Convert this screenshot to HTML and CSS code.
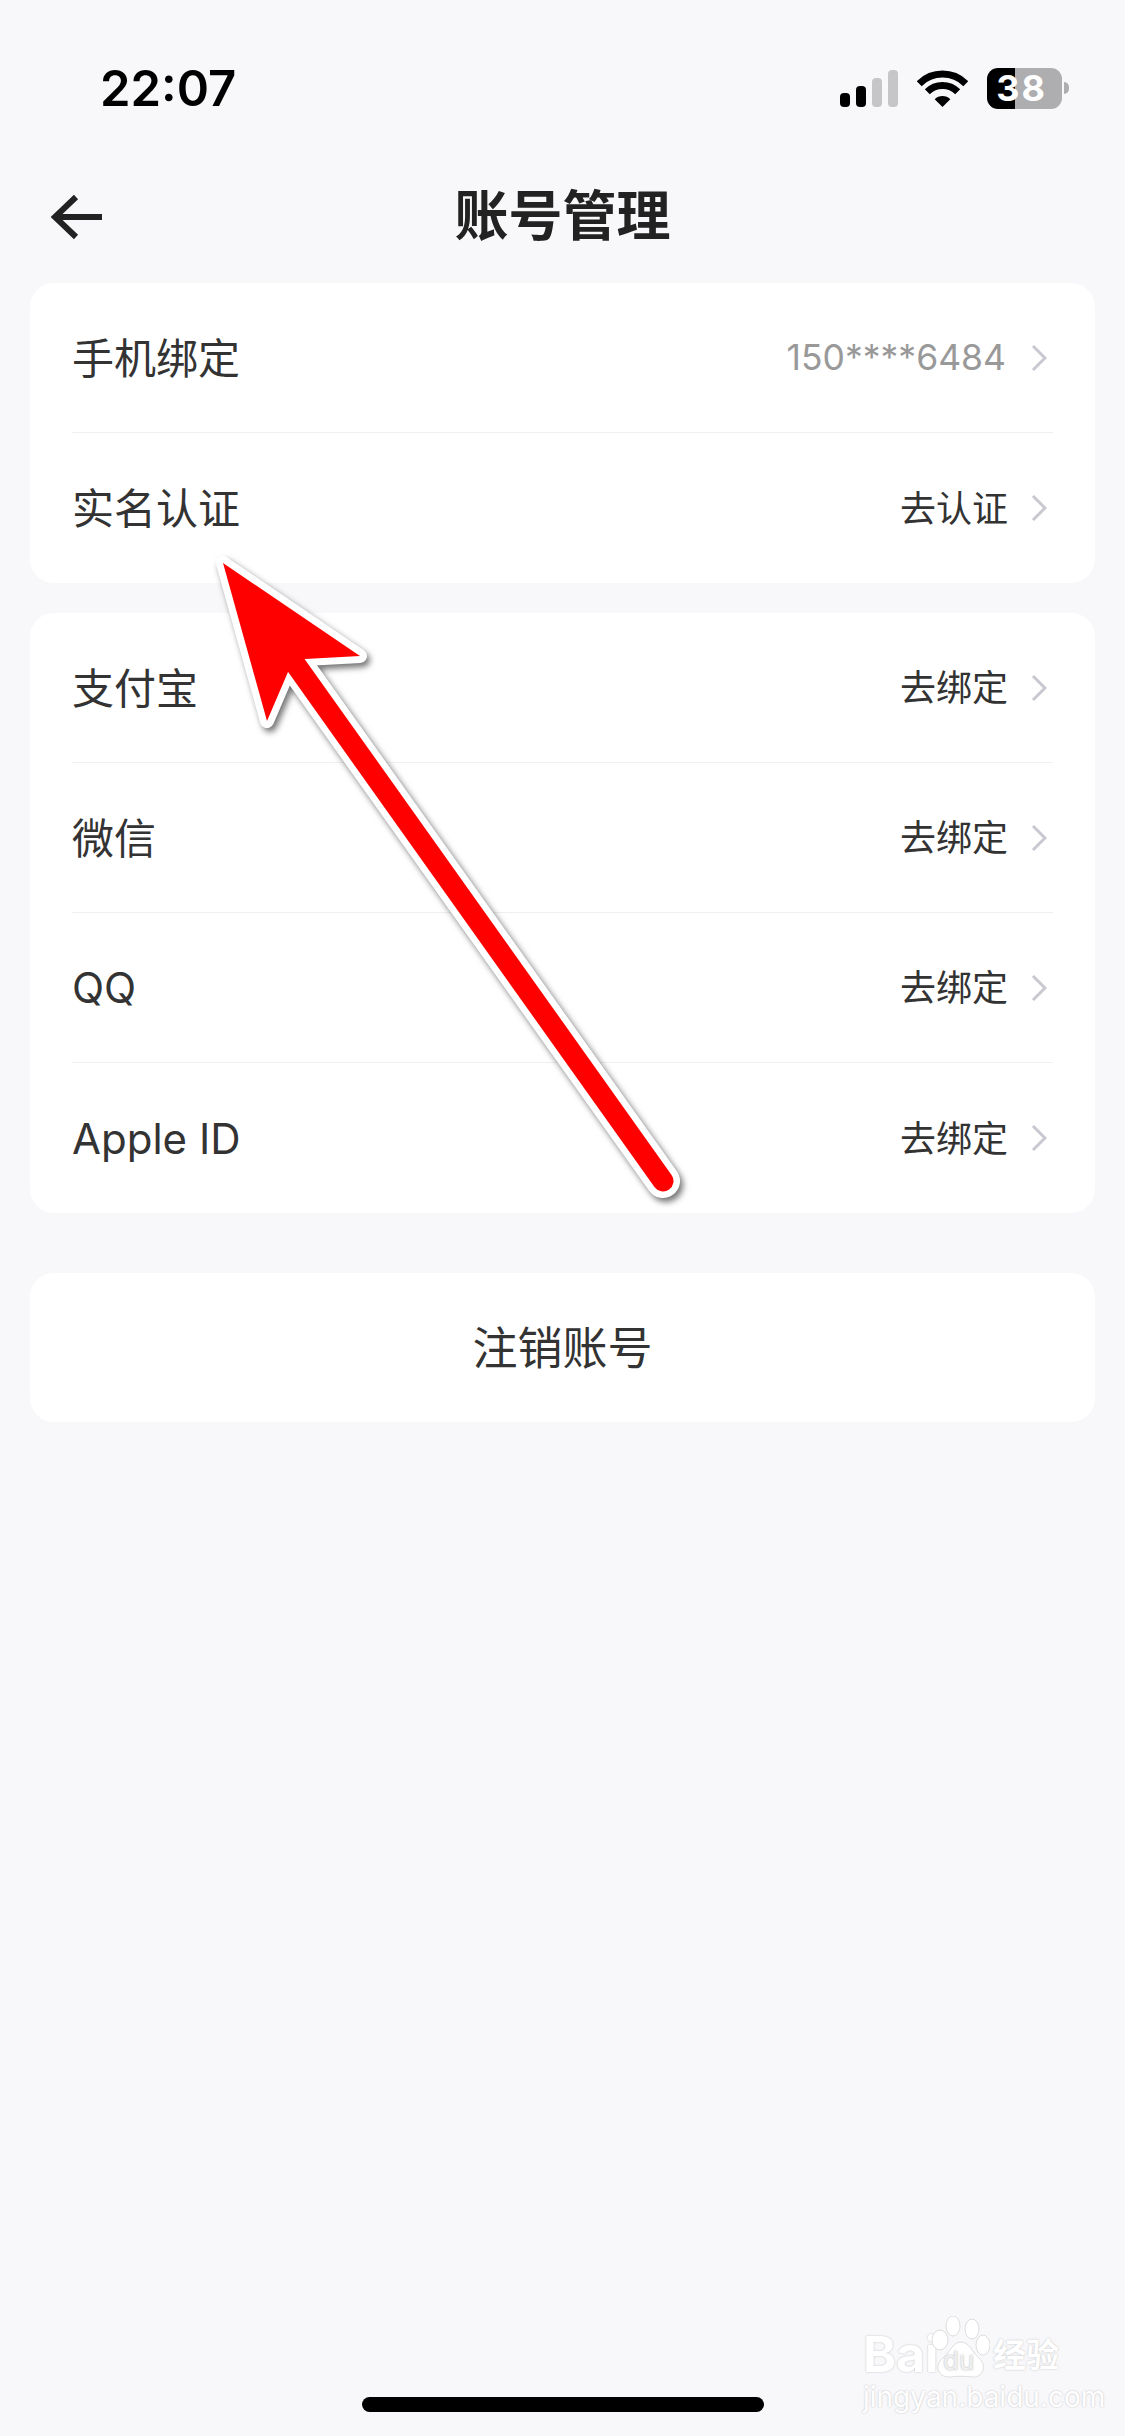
FILE: index.html
```html
<!DOCTYPE html>
<html lang="zh-CN">
<head>
    <meta charset="UTF-8">
    <meta name="viewport" content="width=device-width, initial-scale=1.0">
    <title>账号管理</title>
    <link rel="stylesheet" href="styles.css">
</head>
<body>
    <div class="status-bar">
        <span class="time">22:07</span>
        <div class="status-icons">
            <div class="signal">
                <span class="bar bar-1"></span>
                <span class="bar bar-2"></span>
                <span class="bar bar-3 off"></span>
                <span class="bar bar-4 off"></span>
            </div>
            <svg class="wifi" width="51" height="37" viewBox="0 0 51 37">
                <path d="M2.2 13.7A33 33 0 0 1 48.8 13.7" fill="none" stroke="#000" stroke-width="7"/>
                <path d="M10.3 21.8A21.5 21.5 0 0 1 40.7 21.8" fill="none" stroke="#000" stroke-width="7"/>
                <path d="M25.5 37L17.7 29.2A11 11 0 0 1 33.3 29.2Z" fill="#000"/>
            </svg>
            <div class="battery">
                <span class="battery-body">38</span>
                <span class="battery-nub"></span>
            </div>
        </div>
    </div>

    <div class="nav">
        <svg class="back" width="54" height="46" viewBox="0 0 54 46">
            <path d="M26 3L5 23L26 43M5 23H52" fill="none" stroke="#222" stroke-width="6"/>
        </svg>
        <h1>账号管理</h1>
    </div>

    <div class="main">
        <div class="card">
            <div class="row">
                <span class="label">手机绑定</span>
                <span class="value phone">150****6484</span>
                <svg class="chevron" width="16" height="28" viewBox="0 0 16 28"><path d="M2 2L14 14L2 26" fill="none" stroke="#c8c8d0" stroke-width="3"/></svg>
            </div>
            <div class="row">
                <span class="label">实名认证</span>
                <span class="value">去认证</span>
                <svg class="chevron" width="16" height="28" viewBox="0 0 16 28"><path d="M2 2L14 14L2 26" fill="none" stroke="#c8c8d0" stroke-width="3"/></svg>
            </div>
        </div>

        <div class="card">
            <div class="row">
                <span class="label">支付宝</span>
                <span class="value">去绑定</span>
                <svg class="chevron" width="16" height="28" viewBox="0 0 16 28"><path d="M2 2L14 14L2 26" fill="none" stroke="#c8c8d0" stroke-width="3"/></svg>
            </div>
            <div class="row">
                <span class="label">微信</span>
                <span class="value">去绑定</span>
                <svg class="chevron" width="16" height="28" viewBox="0 0 16 28"><path d="M2 2L14 14L2 26" fill="none" stroke="#c8c8d0" stroke-width="3"/></svg>
            </div>
            <div class="row">
                <span class="label latin">QQ</span>
                <span class="value">去绑定</span>
                <svg class="chevron" width="16" height="28" viewBox="0 0 16 28"><path d="M2 2L14 14L2 26" fill="none" stroke="#c8c8d0" stroke-width="3"/></svg>
            </div>
            <div class="row">
                <span class="label latin">Apple ID</span>
                <span class="value">去绑定</span>
                <svg class="chevron" width="16" height="28" viewBox="0 0 16 28"><path d="M2 2L14 14L2 26" fill="none" stroke="#c8c8d0" stroke-width="3"/></svg>
            </div>
        </div>

        <div class="card card-action">注销账号</div>
    </div>

    <div class="home-indicator"></div>

    <!-- annotation arrow drawn over the screenshot -->
    <svg class="arrow" width="1125" height="2436" viewBox="0 0 1125 2436">
        <g class="arrow-shadow">
            <path d="M223 563L360 656L305 659L288 672L267 721Z" fill="#fff" stroke="#fff" stroke-width="14" stroke-linejoin="round"/>
            <path d="M296 665L663 1181" fill="none" stroke="#fff" stroke-width="34" stroke-linecap="round"/>
        </g>
        <path d="M223 563L360 656L305 659L288 672L267 721Z" fill="#f00"/>
        <path d="M296 665L663 1181" fill="none" stroke="#f00" stroke-width="21" stroke-linecap="round"/>
    </svg>

    <div class="watermark">
        <div class="wm-top">
            <span class="wm-bai">Bai</span>
            <div class="wm-paw">
                <svg width="60" height="64" viewBox="0 0 60 64">
                    <ellipse cx="10" cy="24" rx="8" ry="10"/>
                    <ellipse cx="23" cy="10" rx="7" ry="10"/>
                    <ellipse cx="42" cy="13" rx="7" ry="10"/>
                    <ellipse cx="53" cy="29" rx="7" ry="10"/>
                    <path d="M31 26C39 26 42 36 49 42C58 50 52 62 42 61C35 60 27 60 20 61C9 62 3 50 13 42C20 36 23 26 31 26Z"/>
                </svg>
                <span class="wm-du">du</span>
            </div>
            <span class="wm-jy">经验</span>
        </div>
        <div class="wm-url">jingyan.baidu.com</div>
    </div>
</body>
</html>
```

FILE: styles.css
```css
body {
    margin: 0;
    width: 1125px;
    height: 2436px;
    position: relative;
    overflow: hidden;
    display: flex;
    flex-direction: column;
    background-color: #f8f8fb;
    font-family: "Inter", "Noto Sans CJK SC", sans-serif;
    color: #333;
}
.status-bar {
    height: 88px;
    padding: 44px 56px 0 100px;
    display: flex;
    justify-content: space-between;
    align-items: center;
}
.time {
    font-size: 49px;
    font-weight: 600;
    color: #000;
}
.status-icons {
    display: flex;
    align-items: center;
    gap: 19px;
}
.signal {
    display: flex;
    align-items: flex-end;
    gap: 6px;
    height: 37px;
}
.bar {
    width: 10px;
    background-color: #000;
    border-radius: 4px;
}
.bar.off {
    background-color: #c6c6c8;
}
.bar-1 { height: 14px; }
.bar-2 { height: 21px; }
.bar-3 { height: 29px; }
.bar-4 { height: 37px; }
.battery {
    display: flex;
    align-items: center;
    gap: 2px;
}
.battery-body {
    box-sizing: border-box;
    width: 75px;
    height: 41px;
    padding-right: 6px;
    border-radius: 11px;
    background: linear-gradient(90deg, #000 38%, #aeaeb0 38%);
    color: #fff;
    font-size: 36px;
    font-weight: 700;
    letter-spacing: 2px;
    line-height: 41px;
    text-align: center;
}
.battery-nub {
    width: 5px;
    height: 12px;
    border-radius: 0 5px 5px 0;
    background-color: #aeaeb0;
}
.nav {
    height: 84px;
    padding: 43px 50px 0;
    display: grid;
    grid-template-columns: 1fr auto 1fr;
    grid-template-rows: 84px;
    align-items: center;
}
.back {
    justify-self: start;
}
h1 {
    margin: 0;
    font-size: 54px;
    font-weight: 700;
    line-height: 60px;
    color: #222;
}
.main {
    flex: 1;
    padding: 24px 30px 0;
    display: flex;
    flex-direction: column;
    gap: 30px;
}
.card {
    background-color: #fff;
    border-radius: 24px;
    padding: 0 42px;
}
.row {
    height: 149px;
    display: flex;
    align-items: center;
    border-bottom: 1px solid #f0f0f2;
}
.row:last-child {
    border-bottom: none;
    height: 150px;
}
.label {
    flex: 1;
    font-size: 42px;
    margin-bottom: 5px;
}
.label.latin {
    margin-bottom: 0;
}
.value {
    font-size: 36px;
    margin-bottom: 5px;
}
.phone {
    font-size: 35.5px;
    margin: 0 2px 0 0;
    color: #999;
}
.chevron {
    margin: 0 6px 0 23px;
}
.card-action {
    margin-top: 30px;
    height: 149px;
    line-height: 151px;
    text-align: center;
    font-size: 45px;
}
.home-indicator {
    width: 402px;
    height: 15px;
    margin: 0 auto 24px;
    border-radius: 8px;
    background-color: #000;
}
.arrow {
    position: absolute;
    left: 0;
    top: 0;
}
.arrow-shadow {
    filter: drop-shadow(3px 4px 3px rgba(0, 0, 0, 0.55));
}
.watermark {
    position: absolute;
    left: 863px;
    top: 2316px;
    width: 204px;
    color: #fff;
    text-shadow: 0 0 2px #bbb;
}
.wm-top {
    display: flex;
    align-items: flex-end;
    height: 64px;
}
.wm-bai {
    flex: none;
    width: 67px;
    font-size: 50px;
    font-weight: 700;
    line-height: 46px;
    margin-bottom: 3px;
}
.wm-paw {
    position: relative;
    width: 60px;
    height: 64px;
    flex: none;
}
.wm-paw svg {
    display: block;
    fill: #fff;
    stroke: #ddd;
    stroke-width: 1;
}
.wm-du {
    position: absolute;
    left: 13px;
    bottom: 6px;
    font-size: 26px;
    line-height: 26px;
    color: #f0f0f2;
    text-shadow: 0 0 2px #aaa;
}
.wm-jy {
    font-size: 33px;
    font-weight: 700;
    line-height: 40px;
    margin: 0 0 5px 3px;
}
.wm-url {
    font-size: 28px;
    line-height: 30px;
    margin-top: 2px;
    white-space: nowrap;
}
```
